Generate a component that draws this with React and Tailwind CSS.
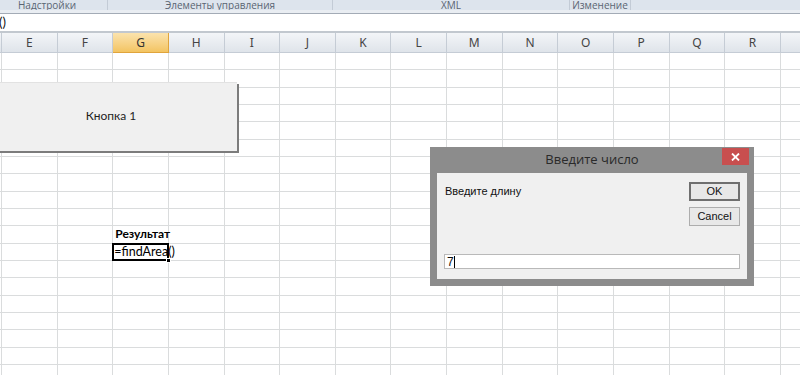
import React from 'react';

const COLS = ['', 'E', 'F', 'G', 'H', 'I', 'J', 'K', 'L', 'M', 'N', 'O', 'P', 'Q', 'R', 'S'];
const ROWS = 19;

function RibbonLabels() {
  return (
    <div className="h-[13px] bg-[#e9edf2] flex flex-col">
      <div className="h-[10px] bg-[#dde4ed] flex text-[10px] leading-[10px] text-[#5a6573] overflow-hidden font-['Open_Sans',sans-serif]">
        <div className="w-[108px] pl-[18px] border-r border-[#c3cbd6]">Надстройки</div>
        <div className="w-[225px] text-center border-r border-[#c3cbd6]">Элементы управления</div>
        <div className="w-[237px] text-center border-r border-[#c3cbd6]">XML</div>
        <div className="w-[61px] text-center border-r border-[#c3cbd6]">Изменение</div>
        <div className="flex-1" />
      </div>
    </div>
  );
}

function FormulaBar() {
  return (
    <div className="h-[20px] border-t border-[#a3abb6] border-b-2 border-b-[#c2c8cf] bg-white flex items-center text-[13px] text-[#111] font-['Lato',sans-serif]">
      <span className="-ml-[1px]">()</span>
    </div>
  );
}

function HeaderRow() {
  return (
    <div className="grid grid-cols-[2px_repeat(15,55.64px)] h-[20px]">
      {COLS.map((c, i) => (
        <div
          key={i}
          className={
            c === 'G'
              ? 'flex items-center justify-center text-[12px] text-[#333] border-r border-b border-[#e0a43c] bg-gradient-to-b from-[#fbe3ad] to-[#f3c461]'
              : 'flex items-center justify-center text-[12px] text-[#444] border-r border-b border-[#c5ccd5] bg-gradient-to-b from-[#f3f5f8] to-[#dfe4ea]'
          }
        >
          {c}
        </div>
      ))}
    </div>
  );
}

function Cell({ row, col }) {
  let content = null;
  if (col === 3 && row === 10) {
    content = (
      <span className="absolute left-[2px] bottom-[0px] text-[12px] font-bold text-black whitespace-nowrap">Результат</span>
    );
  }
  if (col === 3 && row === 11) {
    content = (
      <>
        <div className="absolute -left-[1px] -top-[1px] -right-[1px] -bottom-[1px] border-2 border-black z-10" />
        <span className="absolute left-[1px] bottom-[0px] text-[12.5px] leading-[16px] text-black whitespace-nowrap z-20">=findArea()</span>
        <div className="absolute -right-[3px] -bottom-[3px] w-[5px] h-[5px] bg-black border border-white z-20" />
      </>
    );
  }
  return <div className="relative border-r border-b border-[#dadcdd]">{content}</div>;
}

function Grid() {
  const cells = [];
  for (let r = 0; r < ROWS; r++) {
    for (let c = 0; c < COLS.length; c++) {
      cells.push(<Cell key={r + '-' + c} row={r} col={c} />);
    }
  }
  return (
    <div className="grid grid-cols-[2px_repeat(15,55.64px)] auto-rows-[17.33px] font-['Lato',sans-serif]">
      {cells}
    </div>
  );
}

function FormButton() {
  return (
    <div className="absolute -left-[15px] top-[82px] w-[252px] h-[69px] bg-[#f0f0f0] border-t border-[#e2e2e2] shadow-[2px_2px_0_#7c7c7c] flex items-center justify-center">
      <span className="text-[12px] text-[#1e1e1e] font-['Lato',sans-serif] -mt-[3px]">Кнопка 1</span>
    </div>
  );
}

function InputDialog() {
  return (
    <div className="absolute left-[430px] top-[147px] w-[324px] h-[139px] bg-[#8c8c8c] flex flex-col px-[7px] pb-[7px] font-['Liberation_Sans',sans-serif]">
      <div className="relative h-[26px] flex items-center justify-center">
        <span className="text-[13px] text-[#2a2a2a] font-['Open_Sans',sans-serif]">Введите число</span>
        <div className="absolute right-[-2px] top-[1px] w-[27px] h-[17px] bg-[#c84f4f] flex items-center justify-center">
          <svg width="9" height="8" viewBox="0 0 9 8">
            <path d="M1 0.5 L8 7.5 M8 0.5 L1 7.5" stroke="white" strokeWidth="1.8" />
          </svg>
        </div>
      </div>
      <div className="flex-1 bg-[#f0f0f0] flex flex-col px-[7px] pt-[9px] pb-[10px]">
        <div className="flex justify-between">
          <span className="text-[11px] text-[#111] mt-[1px] ml-[1px]">Введите длину</span>
          <div className="flex flex-col gap-[6px]">
            <div className="w-[51px] h-[19px] bg-[#e8e8e8] border-2 border-[#6f6f6f] flex items-center justify-center text-[11px] text-[#111]">OK</div>
            <div className="w-[51px] h-[19px] bg-[#e8e8e8] border border-[#adadad] flex items-center justify-center text-[11px] text-[#111]">Cancel</div>
          </div>
        </div>
        <div className="mt-auto h-[15px] bg-white border border-[#b9b9b9] flex items-center pl-[2px] text-[12px] text-[#111]">
          7<span className="w-[1px] h-[12px] bg-black" />
        </div>
      </div>
    </div>
  );
}

export default function App() {
  return (
    <div className="relative w-[800px] h-[375px] overflow-hidden bg-white">
      <RibbonLabels />
      <FormulaBar />
      <HeaderRow />
      <Grid />
      <FormButton />
      <InputDialog />
    </div>
  );
}
